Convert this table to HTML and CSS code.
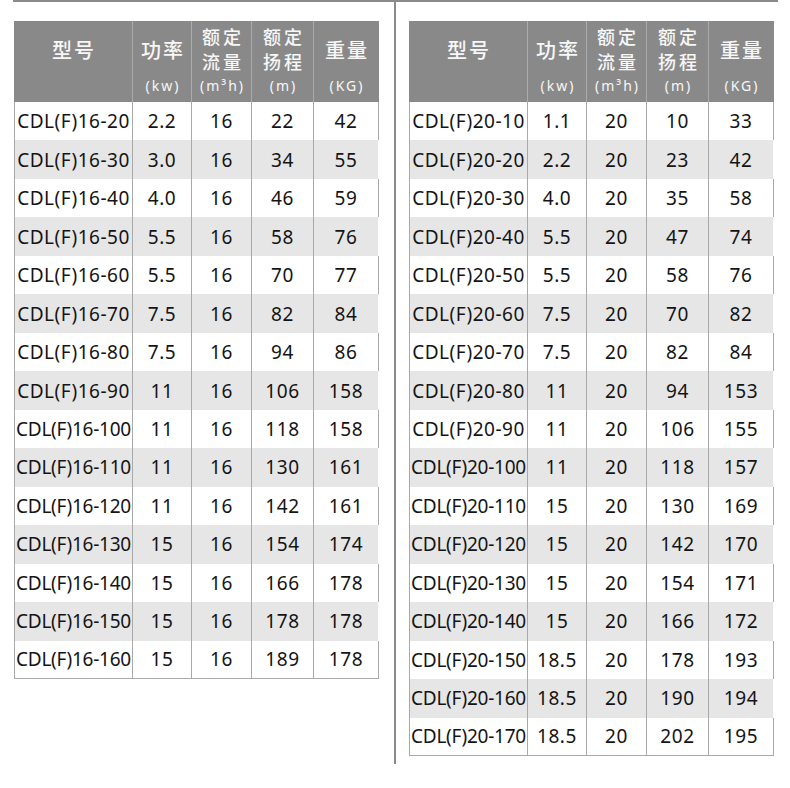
FILE: index.html
```html
<!DOCTYPE html>
<html lang="zh">
<head>
<meta charset="utf-8">
<title>CDL(F) 参数表</title>
<link rel="stylesheet" href="styles.css">
</head>
<body>
<div class="page">
  <div class="panel panel-left">
    <div class="tbl">
      <div class="hrow">
        <div class="hcell"><div class="ht">型号</div><div class="hu"></div></div>
        <div class="hcell"><div class="ht">功率</div><div class="hu">(kw)</div></div>
        <div class="hcell"><div class="ht two">额定<br>流量</div><div class="hu">(m³h)</div></div>
        <div class="hcell"><div class="ht two">额定<br>扬程</div><div class="hu">(m)</div></div>
        <div class="hcell"><div class="ht">重量</div><div class="hu">(KG)</div></div>
      </div>
      <div class="row"><div class="c">CDL(F)16-20</div><div class="c">2.2</div><div class="c">16</div><div class="c">22</div><div class="c">42</div></div>
      <div class="row"><div class="c">CDL(F)16-30</div><div class="c">3.0</div><div class="c">16</div><div class="c">34</div><div class="c">55</div></div>
      <div class="row"><div class="c">CDL(F)16-40</div><div class="c">4.0</div><div class="c">16</div><div class="c">46</div><div class="c">59</div></div>
      <div class="row"><div class="c">CDL(F)16-50</div><div class="c">5.5</div><div class="c">16</div><div class="c">58</div><div class="c">76</div></div>
      <div class="row"><div class="c">CDL(F)16-60</div><div class="c">5.5</div><div class="c">16</div><div class="c">70</div><div class="c">77</div></div>
      <div class="row"><div class="c">CDL(F)16-70</div><div class="c">7.5</div><div class="c">16</div><div class="c">82</div><div class="c">84</div></div>
      <div class="row"><div class="c">CDL(F)16-80</div><div class="c">7.5</div><div class="c">16</div><div class="c">94</div><div class="c">86</div></div>
      <div class="row"><div class="c">CDL(F)16-90</div><div class="c">11</div><div class="c">16</div><div class="c">106</div><div class="c">158</div></div>
      <div class="row"><div class="c long">CDL(F)16-100</div><div class="c">11</div><div class="c">16</div><div class="c">118</div><div class="c">158</div></div>
      <div class="row"><div class="c long">CDL(F)16-110</div><div class="c">11</div><div class="c">16</div><div class="c">130</div><div class="c">161</div></div>
      <div class="row"><div class="c long">CDL(F)16-120</div><div class="c">11</div><div class="c">16</div><div class="c">142</div><div class="c">161</div></div>
      <div class="row"><div class="c long">CDL(F)16-130</div><div class="c">15</div><div class="c">16</div><div class="c">154</div><div class="c">174</div></div>
      <div class="row"><div class="c long">CDL(F)16-140</div><div class="c">15</div><div class="c">16</div><div class="c">166</div><div class="c">178</div></div>
      <div class="row"><div class="c long">CDL(F)16-150</div><div class="c">15</div><div class="c">16</div><div class="c">178</div><div class="c">178</div></div>
      <div class="row"><div class="c long">CDL(F)16-160</div><div class="c">15</div><div class="c">16</div><div class="c">189</div><div class="c">178</div></div>
    </div>
  </div>
  <div class="panel panel-right">
    <div class="tbl">
      <div class="hrow">
        <div class="hcell"><div class="ht">型号</div><div class="hu"></div></div>
        <div class="hcell"><div class="ht">功率</div><div class="hu">(kw)</div></div>
        <div class="hcell"><div class="ht two">额定<br>流量</div><div class="hu">(m³h)</div></div>
        <div class="hcell"><div class="ht two">额定<br>扬程</div><div class="hu">(m)</div></div>
        <div class="hcell"><div class="ht">重量</div><div class="hu">(KG)</div></div>
      </div>
      <div class="row"><div class="c">CDL(F)20-10</div><div class="c">1.1</div><div class="c">20</div><div class="c">10</div><div class="c">33</div></div>
      <div class="row"><div class="c">CDL(F)20-20</div><div class="c">2.2</div><div class="c">20</div><div class="c">23</div><div class="c">42</div></div>
      <div class="row"><div class="c">CDL(F)20-30</div><div class="c">4.0</div><div class="c">20</div><div class="c">35</div><div class="c">58</div></div>
      <div class="row"><div class="c">CDL(F)20-40</div><div class="c">5.5</div><div class="c">20</div><div class="c">47</div><div class="c">74</div></div>
      <div class="row"><div class="c">CDL(F)20-50</div><div class="c">5.5</div><div class="c">20</div><div class="c">58</div><div class="c">76</div></div>
      <div class="row"><div class="c">CDL(F)20-60</div><div class="c">7.5</div><div class="c">20</div><div class="c">70</div><div class="c">82</div></div>
      <div class="row"><div class="c">CDL(F)20-70</div><div class="c">7.5</div><div class="c">20</div><div class="c">82</div><div class="c">84</div></div>
      <div class="row"><div class="c">CDL(F)20-80</div><div class="c">11</div><div class="c">20</div><div class="c">94</div><div class="c">153</div></div>
      <div class="row"><div class="c">CDL(F)20-90</div><div class="c">11</div><div class="c">20</div><div class="c">106</div><div class="c">155</div></div>
      <div class="row"><div class="c long">CDL(F)20-100</div><div class="c">11</div><div class="c">20</div><div class="c">118</div><div class="c">157</div></div>
      <div class="row"><div class="c long">CDL(F)20-110</div><div class="c">15</div><div class="c">20</div><div class="c">130</div><div class="c">169</div></div>
      <div class="row"><div class="c long">CDL(F)20-120</div><div class="c">15</div><div class="c">20</div><div class="c">142</div><div class="c">170</div></div>
      <div class="row"><div class="c long">CDL(F)20-130</div><div class="c">15</div><div class="c">20</div><div class="c">154</div><div class="c">171</div></div>
      <div class="row"><div class="c long">CDL(F)20-140</div><div class="c">15</div><div class="c">20</div><div class="c">166</div><div class="c">172</div></div>
      <div class="row"><div class="c long">CDL(F)20-150</div><div class="c">18.5</div><div class="c">20</div><div class="c">178</div><div class="c">193</div></div>
      <div class="row"><div class="c long">CDL(F)20-160</div><div class="c">18.5</div><div class="c">20</div><div class="c">190</div><div class="c">194</div></div>
      <div class="row"><div class="c long">CDL(F)20-170</div><div class="c">18.5</div><div class="c">20</div><div class="c">202</div><div class="c">195</div></div>
    </div>
  </div>
</div>
</body>
</html>
```

FILE: styles.css
```css
html, body {
  margin: 0;
  padding: 0;
  background: #ffffff;
}

body {
  font-family: "Noto Sans", "Noto Sans CJK SC", sans-serif;
  color: #141414;
}

.page {
  margin-left: 13px;
  width: 765px;
  border-top: 2px solid #8a8a8a;
  display: flex;
  align-items: flex-start;
}

.panel-left {
  width: 380px;
  padding: 19px 0 0 1px;
}

.panel-right {
  border-left: 2px solid #8a8a8a;
  padding: 19px 0 8px 13px;
}

.tbl {
  width: 365px;
}

.hrow,
.row {
  display: grid;
  grid-template-columns: 119px 59px 60px 62px 65px;
}

.hrow {
  height: 81px;
  background: #898989;
}

.hcell {
  box-sizing: border-box;
  border-right: 1px solid #ababab;
  padding-top: 3px;
  display: flex;
  flex-direction: column;
  align-items: center;
  color: #f7f7f7;
  font-family: "Noto Sans CJK SC", "Noto Sans", sans-serif;
}

.hcell:last-child {
  border-right-color: #898989;
}

.ht {
  height: 52px;
  display: flex;
  align-items: center;
  justify-content: center;
  text-align: center;
  font-size: 20px;
  font-weight: 500;
  letter-spacing: 2px;
  padding-left: 2px;
  line-height: 24px;
}

.ht.two {
  font-size: 18px;
  line-height: 25px;
  letter-spacing: 3px;
  padding-left: 3px;
  padding-bottom: 2px;
  box-sizing: border-box;
}

.hu {
  height: 20px;
  line-height: 20px;
  font-family: "Noto Sans", sans-serif;
  font-size: 14px;
  letter-spacing: 2px;
  padding-left: 2px;
}

.row {
  height: 38.47px;
}

.row:nth-child(odd) {
  background: #e6e6e6;
}

.c {
  box-sizing: border-box;
  border-right: 1px solid #a9a9a9;
  display: flex;
  align-items: center;
  justify-content: center;
  font-size: 19px;
  letter-spacing: 0.6px;
  white-space: nowrap;
}

.c:first-child {
  border-left: 1px solid #a9a9a9;
  letter-spacing: 0.5px;
}

.c.long {
  letter-spacing: -0.25px;
}

.row:nth-child(odd) .c:last-child {
  border-right-color: #ffffff;
}

.row:last-child .c {
  border-bottom: 1px solid #a9a9a9;
}
```
